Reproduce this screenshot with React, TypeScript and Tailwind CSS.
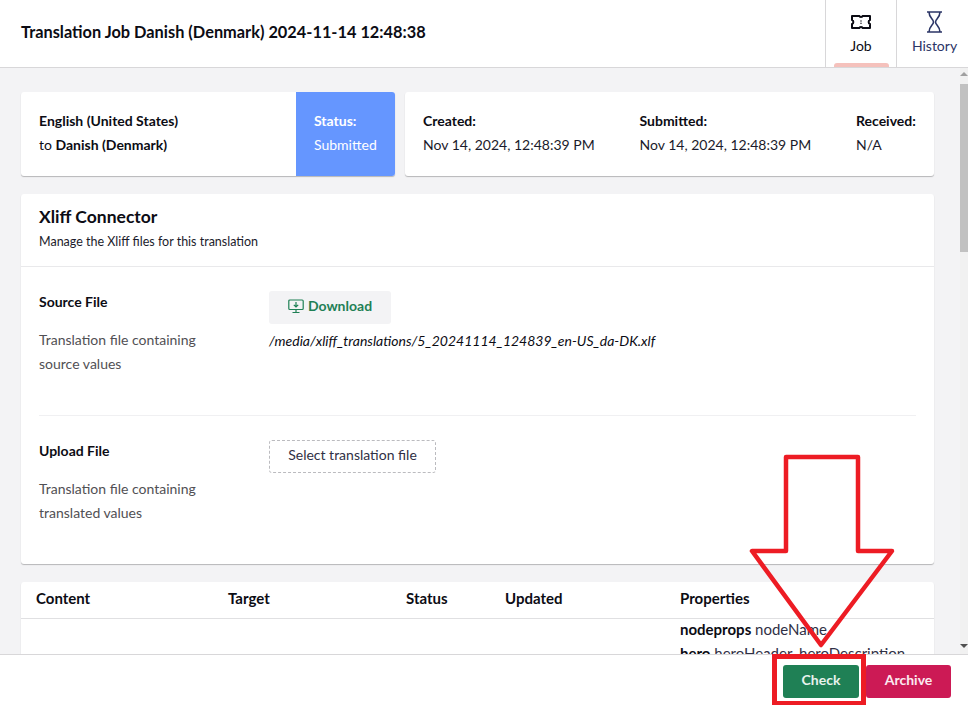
const font = { fontFamily: "Lato, 'Noto Sans', sans-serif" };

function Ticket() {
  return (
    <svg width="22" height="14" viewBox="0 0 22 14" fill="none" stroke="#0c0c14" strokeWidth="2" strokeLinejoin="round">
      <path d="M2 1H9.500C9.500 2.300 12.500 2.300 12.500 1H20V5C18.200 5.300 18.200 8.700 20 9V13H12.500C12.500 11.700 9.500 11.700 9.500 13H2V9C3.800 8.700 3.800 5.300 2 5Z" />
      <path d="M11 5.400V6.400M11 7.800V8.800" strokeWidth="1.500" />
    </svg>
  );
}

function Hourglass() {
  return (
    <svg width="15" height="22" viewBox="0 0 15 22" fill="none" stroke="#2b3566" strokeWidth="1.600">
      <path d="M0 1H15M0 21H15M2 1C2 7 6.500 8 6.500 11C6.500 14 2 15 2 21M13 1C13 7 8.500 8 8.500 11C8.500 14 13 15 13 21" />
    </svg>
  );
}

function DownloadIcon() {
  return (
    <svg width="16" height="16" viewBox="0 0 16 16" fill="none" stroke="#1f8055" strokeWidth="1.200">
      <rect x="0.800" y="2" width="14.400" height="9.500" rx="1" />
      <path d="M8 4V8.500M5.800 6.800L8 9L10.200 6.800M8 11.500V14M4.500 14.500H11.500" />
    </svg>
  );
}

function Tab({ label, icon, active }: { label: string; icon: React.ReactNode; active?: boolean }) {
  return (
    <div className={`relative flex flex-col items-center border-l border-[#d8d7d9] ${active ? "w-[71px] text-[#0c0c14]" : "w-[72px] pl-[4px] text-[#2b3566]"}`}>
      <div className="mt-[10px] flex h-[24px] items-center">{icon}</div>
      <span className="mt-[1px] text-[14px] leading-[22px]">{label}</span>
      {active && <div className="absolute bottom-0 left-[8px] h-[4px] w-[55px] rounded-t-[3px] bg-[#f5c1bc]" />}
    </div>
  );
}

function DateCol({ title, value, className }: { title: string; value: string; className: string }) {
  return (
    <div className={className}>
      <div className="text-[14px] font-bold leading-[24px] text-[#0c0c14]">{title}</div>
      <div className="text-[14px] leading-[24px] text-[#1b1b2b]">{value}</div>
    </div>
  );
}

function FileRow({ title, lines, children }: { title: string; lines: string[]; children: React.ReactNode }) {
  return (
    <div className="flex">
      <div className="w-[230px]">
        <div className="text-[14px] font-bold leading-[22px] text-[#0c0c14]">{title}</div>
        <div className="mt-[15px] text-[14px] leading-[24px] text-[#515054]">
          {lines.map((l) => (
            <div key={l}>{l}</div>
          ))}
        </div>
      </div>
      <div>{children}</div>
    </div>
  );
}

export default function App() {
  return (
    <div style={font} className="relative flex h-[705px] w-[968px] flex-col overflow-hidden bg-white text-[#000]">
      <header className="flex h-[68px] shrink-0 items-stretch justify-between border-b border-[#d8d7d9] bg-white">
        <h1 className="pl-[21px] pt-[21px] text-[16.350px] font-bold leading-[22px] text-[#0c0c14]">
          Translation Job Danish (Denmark) 2024-11-14 12:48:38
        </h1>
        <div className="flex">
          <Tab label="Job" icon={<Ticket />} active />
          <Tab label="History" icon={<Hourglass />} />
        </div>
      </header>

      <div className="flex min-h-0 flex-1">
        <main className="min-w-0 flex-1 overflow-hidden bg-[#f3f3f5] pl-[21px] pr-[26px] pt-[24px]">
          <div className="flex gap-[10px]">
            <div className="flex h-[84px] w-[374px] overflow-hidden rounded-[3px] bg-white shadow-[0_1px_1px_rgba(0,0,0,0.25)]">
              <div className="flex-1 pl-[18px] pt-[17px] text-[14px] leading-[24px] text-[#0c0c14]">
                <div className="font-bold">English (United States)</div>
                <div>
                  to <span className="font-bold">Danish (Denmark)</span>
                </div>
              </div>
              <div className="w-[99px] bg-[#6596ff] pl-[18px] pt-[17px] text-[14px] leading-[24px] text-white">
                <div className="font-bold">Status:</div>
                <div>Submitted</div>
              </div>
            </div>
            <div className="flex h-[84px] flex-1 rounded-[3px] bg-white pl-[18px] pt-[17px] shadow-[0_1px_1px_rgba(0,0,0,0.25)]">
              <DateCol className="w-[216.500px]" title="Created:" value="Nov 14, 2024, 12:48:39 PM" />
              <DateCol className="w-[216.500px]" title="Submitted:" value="Nov 14, 2024, 12:48:39 PM" />
              <DateCol className="" title="Received:" value="N/A" />
            </div>
          </div>

          <section className="mt-[18px] h-[370px] rounded-[3px] bg-white shadow-[0_1px_1px_rgba(0,0,0,0.25)]">
            <div className="h-[73px] border-b border-[#e9e9eb] pl-[18px] pt-[11px]">
              <div className="text-[17.500px] font-bold leading-[23px] text-[#0c0c14]">Xliff Connector</div>
              <div className="mt-[2px] text-[12.500px] leading-[24px] text-[#1b1b2b]">Manage the Xliff files for this translation</div>
            </div>
            <div className="px-[18px] pt-[24px]">
              <FileRow title="Source File" lines={["Translation file containing", "source values"]}>
                <div className="flex h-[33px] w-[122px] items-center justify-center gap-[4px] rounded-[3px] bg-[#f3f3f5] pb-[3px] text-[14px] font-bold leading-[20px] text-[#1f8055]">
                  <DownloadIcon />
                  Download
                </div>
                <div className="mt-[5px] text-[14px] italic leading-[24px] text-[#0c0c14]">
                  /media/xliff_translations/5_20241114_124839_en-US_da-DK.xlf
                </div>
              </FileRow>
              <div className="mb-[24px] mt-[39px] border-t border-[#f0f0f2]" />
              <FileRow title="Upload File" lines={["Translation file containing", "translated values"]}>
                <div className="flex h-[33px] w-[167px] items-center justify-center rounded-[3px] border border-dashed border-[#bbbbbf] pb-[4px] text-[14px] leading-[20px] text-[#303045]">
                  Select translation file
                </div>
              </FileRow>
            </div>
          </section>

          <section className="mt-[18px] rounded-[3px] bg-white shadow-[0_1px_1px_rgba(0,0,0,0.25)]">
            <div className="flex h-[37px] items-center border-b border-[#e0e0e2] pb-[4px] pl-[15px] text-[15px] font-bold leading-[20px] text-[#0c0c14]">
              <div className="w-[192px]">Content</div>
              <div className="w-[178px]">Target</div>
              <div className="w-[99px]">Status</div>
              <div className="w-[175px]">Updated</div>
              <div>Properties</div>
            </div>
            <div className="-mt-[2px] flex flex-col items-start pl-[659px] text-[15px] leading-[24px] text-[#303045]">
              <div className="whitespace-nowrap">
                <b className="text-[#0c0c14]">nodeprops</b> nodeName
              </div>
              <div className="whitespace-nowrap">
                <b className="text-[#0c0c14]">hero</b> heroHeader, heroDescription
              </div>
            </div>
          </section>
        </main>

        <div className="flex w-[8px] shrink-0 flex-col items-center bg-[#f1f1f1]">
          <div className="mt-[4px] h-0 w-0 border-x-[4px] border-b-[4px] border-x-transparent border-b-[#a0a0a0]" />
          <div className="mt-[8px] h-[168px] w-full bg-[#c1c1c1]" />
          <div className="mb-[6px] mt-auto h-0 w-0 border-x-[4px] border-t-[4px] border-x-transparent border-t-[#505050]" />
        </div>
      </div>

      <footer className="flex h-[51px] shrink-0 items-start justify-end gap-[7px] border-t border-[#d8d7d9] bg-white pr-[17px] pt-[10px]">
        <div className="flex h-[33px] w-[76px] items-center justify-center rounded-[3px] bg-[#1f8055] pb-[3px] text-[14px] font-bold leading-[20px] text-[#e8f3ee]">Check</div>
        <div className="flex h-[33px] w-[85px] items-center justify-center rounded-[3px] bg-[#cc1a55] pb-[3px] text-[14px] font-bold leading-[20px] text-[#fbeaf0]">Archive</div>
      </footer>

      <svg className="pointer-events-none absolute left-0 top-0" width="968" height="705" fill="none" stroke="#ed1c24">
        <path strokeWidth="4.500" strokeLinejoin="round" d="M786 457H858V551H892L821 645L752 551H786Z" />
        <rect x="774.500" y="656.500" width="89" height="47" strokeWidth="5" />
      </svg>
    </div>
  );
}
